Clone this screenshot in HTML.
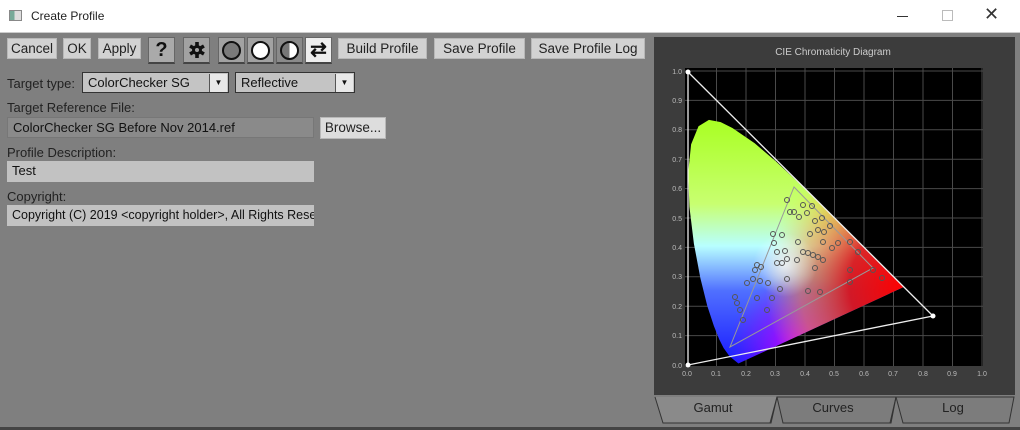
<!DOCTYPE html>
<html><head><meta charset="utf-8"><style>
*{margin:0;padding:0;box-sizing:border-box}
body{width:1020px;height:430px;background:#7f7f7f;font-family:"Liberation Sans",sans-serif;position:relative;overflow:hidden;color:#111}
.a{position:absolute}
.tb{left:0;top:0;width:1020px;height:33px;background:#fff;border-bottom:1px solid #ccc}
.btn{position:absolute;background:#d2d2d2;border:1px solid #b8b8b8;font-size:13.5px;text-align:center;line-height:19px;color:#222;height:21px;top:38px}
.ib{position:absolute;top:37px;height:27px;width:27px;border:1px solid #666;border-bottom:2px solid #444}
.lbl{position:absolute;font-size:13px;color:#222}
.fld{position:absolute;height:21px;font-size:13px;line-height:20px;padding-left:5px;white-space:nowrap;overflow:hidden}
</style></head><body>
<div class="a tb"></div>
<div class="a" style="left:9px;top:10px;width:13px;height:11px;border:1px solid #888;background:linear-gradient(90deg,#7a9 0 40%,#ddd 40%)"></div>
<div class="a" style="left:31px;top:9px;font-size:12px;color:#222">Create Profile</div>
<div class="a" style="left:897px;top:16px;width:11px;height:1px;background:#333"></div>
<div class="a" style="left:942px;top:10px;width:11px;height:11px;border:1px solid #bbb"></div>
<div class="a" style="left:984px;top:4px;font-size:18px;color:#333">✕</div>

<div class="btn" style="left:7px;width:50px">Cancel</div>
<div class="btn" style="left:63px;width:28px">OK</div>
<div class="btn" style="left:98px;width:43px">Apply</div>
<div class="ib" style="left:148px;background:#aaa;font-size:20px;font-weight:bold;text-align:center;line-height:25px">?</div>
<div class="ib" style="left:183px;background:#a2a2a2"><svg class="a" style="left:5px;top:4px" width="16" height="16" viewBox="-8 -8 16 16"><g fill="#111"><circle r="5"/><rect x="-1.8" y="-8" width="3.6" height="16"/><rect x="-1.8" y="-8" width="3.6" height="16" transform="rotate(60)"/><rect x="-1.8" y="-8" width="3.6" height="16" transform="rotate(120)"/></g><circle r="2" fill="#a2a2a2"/></svg></div>
<div class="ib" style="left:218px;background:#a2a2a2"><div class="a" style="left:3px;top:3px;width:19px;height:19px;border-radius:50%;border:2px solid #111;background:#7a7a7a"></div></div>
<div class="ib" style="left:247px;background:#a2a2a2"><div class="a" style="left:3px;top:3px;width:19px;height:19px;border-radius:50%;border:2px solid #111;background:#fff"></div></div>
<div class="ib" style="left:276px;background:#8a8a8a"><div class="a" style="left:3px;top:3px;width:19px;height:19px;border-radius:50%;border:2px solid #111;background:linear-gradient(90deg,#777 50%,#fff 50%)"></div></div>
<div class="ib" style="left:305px;background:#eee;font-size:20px;text-align:center;line-height:24px;font-weight:bold">⇄</div>
<div class="btn" style="left:338px;width:89px">Build Profile</div>
<div class="btn" style="left:434px;width:91px">Save Profile</div>
<div class="btn" style="left:531px;width:114px">Save Profile Log</div>

<div class="lbl" style="left:7px;top:76px">Target type:</div>
<div class="fld" style="left:82px;top:72px;width:147px;background:#c4c4c4;border:1px solid #333">ColorChecker SG</div>
<div class="a" style="left:209px;top:74px;width:18px;height:18px;background:#e8e8e8;border-left:1px solid #555;font-size:8px;text-align:center;line-height:18px">▼</div>
<div class="fld" style="left:235px;top:72px;width:120px;background:#c4c4c4;border:1px solid #333">Reflective</div>
<div class="a" style="left:335px;top:74px;width:18px;height:18px;background:#e8e8e8;border-left:1px solid #555;font-size:8px;text-align:center;line-height:18px">▼</div>

<div class="lbl" style="left:7px;top:100px">Target Reference File:</div>
<div class="fld" style="left:7px;top:117px;width:307px;background:#8a8a8a;border:1px solid #777">ColorChecker SG Before Nov 2014.ref</div>
<div class="btn" style="left:320px;top:117px;width:66px;height:22px;background:#ddd">Browse...</div>
<div class="lbl" style="left:7px;top:145px">Profile Description:</div>
<div class="fld" style="left:7px;top:161px;width:307px;background:#c2c2c2">Test</div>
<div class="lbl" style="left:7px;top:189px">Copyright:</div>
<div class="fld" style="left:7px;top:205px;width:307px;background:#c2c2c2;font-size:12.5px">Copyright (C) 2019 &lt;copyright holder&gt;, All Rights Reserved</div>

<div class="a" style="left:654px;top:37px;width:361px;height:358px;background:#3c3c3c"></div>
<svg class="a" style="left:0;top:0" width="1020" height="430" font-family="Liberation Sans,sans-serif">
<defs>
<clipPath id="loc"><path d="M738.4,363.5 L729.5,356.3 723.6,348 719.3,339.5 713.9,326 707.3,306 700.4,278.3 693.9,243.7 689.4,206.7 688.2,172.5 691.1,144.4 698.5,126.3 708.9,119.9 720.7,122.1 732.6,128.1 754.7,143.2 776,161.5 797.1,181.4 818,201.9 838.2,221.9 856.7,240.3 872,255.5 891,274.4 903.7,287 Z"/></clipPath>
<linearGradient id="v" x1="0" y1="117" x2="0" y2="365" gradientUnits="userSpaceOnUse">
<stop offset="0" stop-color="#a8ff20"/><stop offset="0.35" stop-color="#c8ff70"/><stop offset="0.52" stop-color="#b8ffff"/><stop offset="0.7" stop-color="#5070ff"/><stop offset="1" stop-color="#1818ff"/></linearGradient>
<radialGradient id="r" cx="905" cy="285" r="140" gradientUnits="userSpaceOnUse"><stop offset="0" stop-color="#ff0000"/><stop offset="0.4" stop-color="#e01010" stop-opacity="0.9"/><stop offset="0.75" stop-color="#ff9020" stop-opacity="0.5"/><stop offset="1" stop-color="#ffd040" stop-opacity="0"/></radialGradient>
<radialGradient id="m" cx="800" cy="345" r="70" gradientUnits="userSpaceOnUse"><stop offset="0" stop-color="#d000ff"/><stop offset="1" stop-color="#a000ff" stop-opacity="0"/></radialGradient>
<radialGradient id="w" cx="785" cy="265" r="32" gradientUnits="userSpaceOnUse"><stop offset="0" stop-color="#fff" stop-opacity="0.75"/><stop offset="1" stop-color="#fff" stop-opacity="0"/></radialGradient>
</defs>
<text x="833" y="55" font-size="10" fill="#ccc" text-anchor="middle">CIE Chromaticity Diagram</text>
<rect x="685" y="68" width="298" height="298" fill="#000"/>
<g stroke="#4a4a4a" stroke-width="1">
<path d="M716.5,68V366M746,68V366M775.5,68V366M805,68V366M834.5,68V366M864,68V366M893.5,68V366M923,68V366M952.5,68V366M982,68V366"/>
<path d="M685,335.6H983M685,306.2H983M685,276.8H983M685,247.4H983M685,218H983M685,188.6H983M685,159.2H983M685,129.8H983M685,100.4H983M685,71H983"/>
</g>
<g clip-path="url(#loc)"><rect x="680" y="110" width="230" height="260" fill="url(#v)"/><rect x="680" y="110" width="230" height="260" fill="url(#m)"/><rect x="680" y="110" width="230" height="260" fill="url(#r)"/><rect x="680" y="110" width="230" height="260" fill="url(#w)"/></g>
<g font-size="7" fill="#bbb" text-anchor="end">
<text x="682" y="368">0.0</text><text x="682" y="338">0.1</text><text x="682" y="309">0.2</text><text x="682" y="279">0.3</text><text x="682" y="250">0.4</text><text x="682" y="221">0.5</text><text x="682" y="191">0.6</text><text x="682" y="162">0.7</text><text x="682" y="132">0.8</text><text x="682" y="103">0.9</text><text x="682" y="74">1.0</text></g>
<g font-size="7" fill="#bbb" text-anchor="middle">
<text x="687" y="376">0.0</text><text x="716" y="376">0.1</text><text x="746" y="376">0.2</text><text x="775" y="376">0.3</text><text x="805" y="376">0.4</text><text x="834" y="376">0.5</text><text x="864" y="376">0.6</text><text x="893" y="376">0.7</text><text x="923" y="376">0.8</text><text x="952" y="376">0.9</text><text x="982" y="376">1.0</text></g>
<path d="M794,187 L873,268 L730,347 Z" fill="none" stroke="#999" stroke-width="1"/>
<g fill="none" stroke="#555" stroke-width="1">
<circle cx="787" cy="200" r="2.5"/><circle cx="790" cy="212" r="2.5"/><circle cx="794" cy="212" r="2.5"/><circle cx="803" cy="205" r="2.5"/><circle cx="807" cy="213" r="2.5"/><circle cx="812" cy="206" r="2.5"/><circle cx="799" cy="217" r="2.5"/><circle cx="815" cy="221" r="2.5"/><circle cx="822" cy="218" r="2.5"/><circle cx="830" cy="226" r="2.5"/><circle cx="818" cy="230" r="2.5"/><circle cx="810" cy="234" r="2.5"/><circle cx="824" cy="232" r="2.5"/><circle cx="773" cy="234" r="2.5"/><circle cx="782" cy="235" r="2.5"/><circle cx="774" cy="243" r="2.5"/><circle cx="798" cy="242" r="2.5"/><circle cx="823" cy="242" r="2.5"/><circle cx="832" cy="248" r="2.5"/><circle cx="838" cy="243" r="2.5"/><circle cx="850" cy="242" r="2.5"/><circle cx="803" cy="252" r="2.5"/><circle cx="808" cy="253" r="2.5"/><circle cx="813" cy="255" r="2.5"/><circle cx="818" cy="257" r="2.5"/><circle cx="823" cy="260" r="2.5"/><circle cx="777" cy="252" r="2.5"/><circle cx="785" cy="251" r="2.5"/><circle cx="797" cy="260" r="2.5"/><circle cx="782" cy="263" r="2.5"/><circle cx="777" cy="263" r="2.5"/><circle cx="787" cy="259" r="2.5"/><circle cx="757" cy="265" r="2.5"/><circle cx="761" cy="267" r="2.5"/><circle cx="755" cy="270" r="2.5"/><circle cx="815" cy="268" r="2.5"/><circle cx="850" cy="270" r="2.5"/><circle cx="858" cy="252" r="2.5"/><circle cx="873" cy="270" r="2.5"/><circle cx="753" cy="279" r="2.5"/><circle cx="760" cy="281" r="2.5"/><circle cx="747" cy="283" r="2.5"/><circle cx="768" cy="283" r="2.5"/><circle cx="787" cy="279" r="2.5"/><circle cx="780" cy="289" r="2.5"/><circle cx="808" cy="291" r="2.5"/><circle cx="820" cy="292" r="2.5"/><circle cx="850" cy="282" r="2.5"/><circle cx="882" cy="278" r="2.5"/><circle cx="757" cy="298" r="2.5"/><circle cx="772" cy="298" r="2.5"/><circle cx="735" cy="297" r="2.5"/><circle cx="737" cy="303" r="2.5"/><circle cx="767" cy="310" r="2.5"/><circle cx="740" cy="310" r="2.5"/><circle cx="743" cy="320" r="2.5"/>
</g>
<path d="M688,72 L933,316 L688,365 Z" fill="none" stroke="#eee" stroke-width="1.3"/>
<g fill="#fff"><circle cx="688" cy="72" r="2.5"/><circle cx="933" cy="316" r="2.5"/><circle cx="688" cy="365" r="2.5"/></g>
<g stroke="#333" stroke-width="1">
<path d="M655,397 L663,423 L771,423 L777,397" fill="#8a8a8a"/>
<path d="M777,397 L770,423 M777,397 L783,423 L891,423 L896,397 Z" fill="#7c7c7c"/>
<path d="M896,397 L890,423 M896,397 L903,423 L1009,423 L1014,397 Z" fill="#7c7c7c"/>
</g>
<g font-size="13" fill="#222" text-anchor="middle"><text x="713" y="412">Gamut</text><text x="833" y="412">Curves</text><text x="953" y="412">Log</text></g>
<rect x="0" y="427" width="1020" height="3" fill="#444"/>
</svg>
</body></html>
